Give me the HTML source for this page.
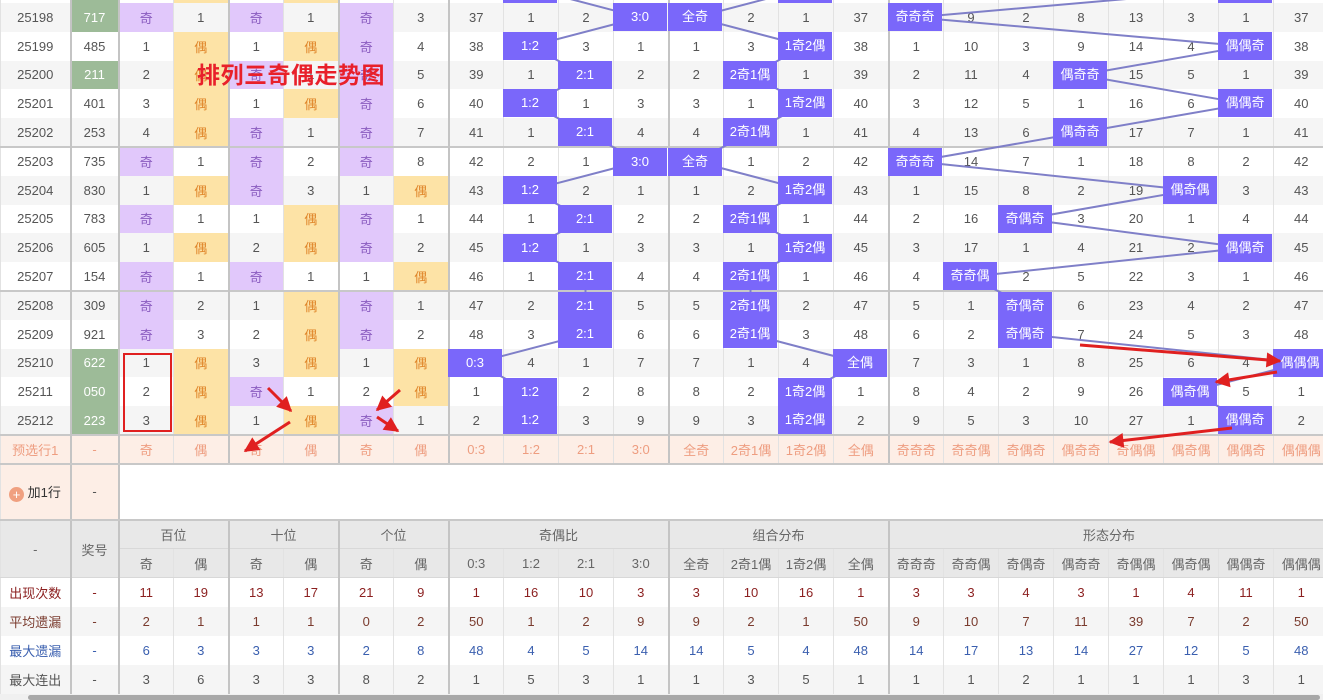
<!DOCTYPE html>
<html><head><meta charset="utf-8"><style>
html,body{margin:0;padding:0;width:1323px;height:700px;overflow:hidden;background:#fff;position:relative}
body{font-family:"Liberation Sans","Noto Sans CJK SC",sans-serif;font-size:13px;color:#555}
table{position:absolute;left:0;top:-25.8px;border-collapse:collapse;table-layout:fixed;width:1328px}
td{height:28.8px;padding:0;text-align:center;border-left:1px solid #e2e2e2;white-space:nowrap;overflow:hidden;box-sizing:border-box}
tr.d td:nth-child(2),tr.d td:nth-child(3),tr.d td:nth-child(5),tr.d td:nth-child(7),tr.d td:nth-child(9),tr.d td:nth-child(13),tr.d td:nth-child(17){border-left:2px solid #c4c4c4}
td.B{border-left:2px solid #c4c4c4}
tr.a td{background:#f5f5f5}
tr.t td{border-top:2px solid #c8c8c8}
td.p{background:#e1c8fb!important;color:#8a5cc0}
td.y{background:#fde3a6!important;color:#e0862a}
td.g{background:#9dbb98!important;color:#fff}
tr.pre td{background:#fdeee6;color:#ee9d80;border-top:2px solid #c8c8c8;border-bottom:2px solid #c8c8c8}
tr.add td{height:56px;border-bottom:2px solid #c8c8c8}
tr.h td{background:#e8e8e8;color:#666;height:29px;border-bottom:1px solid #d8d8d8}
tr.s td{height:29px}
tr.s1 td{color:#8b1f1f}tr.s2 td{color:#7a3b2e}tr.s3 td{color:#3a5faf}
.hl{position:absolute;width:54px;height:28px;background:#7a67fa;color:#fff;font-size:13px;line-height:28px;text-align:center;white-space:nowrap;overflow:hidden}
</style></head><body>
<table>
<colgroup><col style="width:70px"><col style="width:48px"><col span="22" style="width:55px"></colgroup>
<tr class="d"><td></td><td class="g"></td><td></td><td class="y"></td><td></td><td class="y"></td><td></td><td></td><td></td><td></td><td></td><td></td><td></td><td></td><td></td><td></td><td></td><td></td><td></td><td></td><td></td><td></td><td></td><td></td></tr>
<tr class="d a"><td>25198</td><td class="g">717</td><td class="p">奇</td><td>1</td><td class="p">奇</td><td>1</td><td class="p">奇</td><td>3</td><td>37</td><td>1</td><td>2</td><td></td><td></td><td>2</td><td>1</td><td>37</td><td></td><td>9</td><td>2</td><td>8</td><td>13</td><td>3</td><td>1</td><td>37</td></tr>
<tr class="d"><td>25199</td><td>485</td><td>1</td><td class="y">偶</td><td>1</td><td class="y">偶</td><td class="p">奇</td><td>4</td><td>38</td><td></td><td>3</td><td>1</td><td>1</td><td>3</td><td></td><td>38</td><td>1</td><td>10</td><td>3</td><td>9</td><td>14</td><td>4</td><td></td><td>38</td></tr>
<tr class="d a"><td>25200</td><td class="g">211</td><td>2</td><td class="y">偶</td><td class="p">奇</td><td>1</td><td class="p">奇</td><td>5</td><td>39</td><td>1</td><td></td><td>2</td><td>2</td><td></td><td>1</td><td>39</td><td>2</td><td>11</td><td>4</td><td></td><td>15</td><td>5</td><td>1</td><td>39</td></tr>
<tr class="d"><td>25201</td><td>401</td><td>3</td><td class="y">偶</td><td>1</td><td class="y">偶</td><td class="p">奇</td><td>6</td><td>40</td><td></td><td>1</td><td>3</td><td>3</td><td>1</td><td></td><td>40</td><td>3</td><td>12</td><td>5</td><td>1</td><td>16</td><td>6</td><td></td><td>40</td></tr>
<tr class="d a"><td>25202</td><td>253</td><td>4</td><td class="y">偶</td><td class="p">奇</td><td>1</td><td class="p">奇</td><td>7</td><td>41</td><td>1</td><td></td><td>4</td><td>4</td><td></td><td>1</td><td>41</td><td>4</td><td>13</td><td>6</td><td></td><td>17</td><td>7</td><td>1</td><td>41</td></tr>
<tr class="d t"><td>25203</td><td>735</td><td class="p">奇</td><td>1</td><td class="p">奇</td><td>2</td><td class="p">奇</td><td>8</td><td>42</td><td>2</td><td>1</td><td></td><td></td><td>1</td><td>2</td><td>42</td><td></td><td>14</td><td>7</td><td>1</td><td>18</td><td>8</td><td>2</td><td>42</td></tr>
<tr class="d a"><td>25204</td><td>830</td><td>1</td><td class="y">偶</td><td class="p">奇</td><td>3</td><td>1</td><td class="y">偶</td><td>43</td><td></td><td>2</td><td>1</td><td>1</td><td>2</td><td></td><td>43</td><td>1</td><td>15</td><td>8</td><td>2</td><td>19</td><td></td><td>3</td><td>43</td></tr>
<tr class="d"><td>25205</td><td>783</td><td class="p">奇</td><td>1</td><td>1</td><td class="y">偶</td><td class="p">奇</td><td>1</td><td>44</td><td>1</td><td></td><td>2</td><td>2</td><td></td><td>1</td><td>44</td><td>2</td><td>16</td><td></td><td>3</td><td>20</td><td>1</td><td>4</td><td>44</td></tr>
<tr class="d a"><td>25206</td><td>605</td><td>1</td><td class="y">偶</td><td>2</td><td class="y">偶</td><td class="p">奇</td><td>2</td><td>45</td><td></td><td>1</td><td>3</td><td>3</td><td>1</td><td></td><td>45</td><td>3</td><td>17</td><td>1</td><td>4</td><td>21</td><td>2</td><td></td><td>45</td></tr>
<tr class="d"><td>25207</td><td>154</td><td class="p">奇</td><td>1</td><td class="p">奇</td><td>1</td><td>1</td><td class="y">偶</td><td>46</td><td>1</td><td></td><td>4</td><td>4</td><td></td><td>1</td><td>46</td><td>4</td><td></td><td>2</td><td>5</td><td>22</td><td>3</td><td>1</td><td>46</td></tr>
<tr class="d a t"><td>25208</td><td>309</td><td class="p">奇</td><td>2</td><td>1</td><td class="y">偶</td><td class="p">奇</td><td>1</td><td>47</td><td>2</td><td></td><td>5</td><td>5</td><td></td><td>2</td><td>47</td><td>5</td><td>1</td><td></td><td>6</td><td>23</td><td>4</td><td>2</td><td>47</td></tr>
<tr class="d"><td>25209</td><td>921</td><td class="p">奇</td><td>3</td><td>2</td><td class="y">偶</td><td class="p">奇</td><td>2</td><td>48</td><td>3</td><td></td><td>6</td><td>6</td><td></td><td>3</td><td>48</td><td>6</td><td>2</td><td></td><td>7</td><td>24</td><td>5</td><td>3</td><td>48</td></tr>
<tr class="d a"><td>25210</td><td class="g">622</td><td>1</td><td class="y">偶</td><td>3</td><td class="y">偶</td><td>1</td><td class="y">偶</td><td></td><td>4</td><td>1</td><td>7</td><td>7</td><td>1</td><td>4</td><td></td><td>7</td><td>3</td><td>1</td><td>8</td><td>25</td><td>6</td><td>4</td><td></td></tr>
<tr class="d"><td>25211</td><td class="g">050</td><td>2</td><td class="y">偶</td><td class="p">奇</td><td>1</td><td>2</td><td class="y">偶</td><td>1</td><td></td><td>2</td><td>8</td><td>8</td><td>2</td><td></td><td>1</td><td>8</td><td>4</td><td>2</td><td>9</td><td>26</td><td></td><td>5</td><td>1</td></tr>
<tr class="d a"><td>25212</td><td class="g">223</td><td>3</td><td class="y">偶</td><td>1</td><td class="y">偶</td><td class="p">奇</td><td>1</td><td>2</td><td></td><td>3</td><td>9</td><td>9</td><td>3</td><td></td><td>2</td><td>9</td><td>5</td><td>3</td><td>10</td><td>27</td><td>1</td><td></td><td>2</td></tr>
<tr class="d pre"><td>预选行1</td><td>-</td><td>奇</td><td>偶</td><td>奇</td><td>偶</td><td>奇</td><td>偶</td><td>0:3</td><td>1:2</td><td>2:1</td><td>3:0</td><td>全奇</td><td>2奇1偶</td><td>1奇2偶</td><td>全偶</td><td>奇奇奇</td><td>奇奇偶</td><td>奇偶奇</td><td>偶奇奇</td><td>奇偶偶</td><td>偶奇偶</td><td>偶偶奇</td><td>偶偶偶</td></tr>
<tr class="d add"><td style="background:#fdeee6;color:#333;text-align:left;padding-left:8px"><span style="display:inline-block;width:15px;height:15px;border-radius:50%;background:#f0a080;color:#fff;font-size:13px;line-height:15px;text-align:center;vertical-align:-2px">+</span> 加1行</td><td style="background:#fdeee6">-</td><td colspan="22"></td></tr>
<tr class="h"><td rowspan="2">-</td><td rowspan="2" class="B">奖号</td><td colspan="2" class="B">百位</td><td colspan="2" class="B">十位</td><td colspan="2" class="B">个位</td><td colspan="4" class="B">奇偶比</td><td colspan="4" class="B">组合分布</td><td colspan="8" class="B">形态分布</td></tr>
<tr class="h"><td class="B">奇</td><td>偶</td><td class="B">奇</td><td>偶</td><td class="B">奇</td><td>偶</td><td class="B">0:3</td><td>1:2</td><td>2:1</td><td>3:0</td><td class="B">全奇</td><td>2奇1偶</td><td>1奇2偶</td><td>全偶</td><td class="B">奇奇奇</td><td>奇奇偶</td><td>奇偶奇</td><td>偶奇奇</td><td>奇偶偶</td><td>偶奇偶</td><td>偶偶奇</td><td>偶偶偶</td></tr>
<tr class="d s s1"><td>出现次数</td><td>-</td><td>11</td><td>19</td><td>13</td><td>17</td><td>21</td><td>9</td><td>1</td><td>16</td><td>10</td><td>3</td><td>3</td><td>10</td><td>16</td><td>1</td><td>3</td><td>3</td><td>4</td><td>3</td><td>1</td><td>4</td><td>11</td><td>1</td></tr>
<tr class="d s s2 a"><td>平均遗漏</td><td>-</td><td>2</td><td>1</td><td>1</td><td>1</td><td>0</td><td>2</td><td>50</td><td>1</td><td>2</td><td>9</td><td>9</td><td>2</td><td>1</td><td>50</td><td>9</td><td>10</td><td>7</td><td>11</td><td>39</td><td>7</td><td>2</td><td>50</td></tr>
<tr class="d s s3"><td>最大遗漏</td><td>-</td><td>6</td><td>3</td><td>3</td><td>3</td><td>2</td><td>8</td><td>48</td><td>4</td><td>5</td><td>14</td><td>14</td><td>5</td><td>4</td><td>48</td><td>14</td><td>17</td><td>13</td><td>14</td><td>27</td><td>12</td><td>5</td><td>48</td></tr>
<tr class="d s a"><td>最大连出</td><td>-</td><td>3</td><td>6</td><td>3</td><td>3</td><td>8</td><td>2</td><td>1</td><td>5</td><td>3</td><td>1</td><td>1</td><td>3</td><td>5</td><td>1</td><td>1</td><td>1</td><td>2</td><td>1</td><td>1</td><td>1</td><td>3</td><td>1</td></tr>
</table>
<svg style="position:absolute;left:0;top:0" width="1323" height="700">
<g fill="none" stroke="#7f7fc8" stroke-width="2">
<polyline points="530.5,-11.4 640.5,17.4 530.5,46.2 585.5,75 530.5,103.8 585.5,132.6 640.5,161.4 530.5,190.2 585.5,219 530.5,247.8 585.5,276.6 585.5,305.4 585.5,334.2 475.5,363 530.5,391.8 530.5,420.6"/>
<polyline points="805.5,-11.4 695.5,17.4 805.5,46.2 750.5,75 805.5,103.8 750.5,132.6 695.5,161.4 805.5,190.2 750.5,219 805.5,247.8 750.5,276.6 750.5,305.4 750.5,334.2 860.5,363 805.5,391.8 805.5,420.6"/>
<polyline points="1245.5,-11.4 915.5,17.4 1245.5,46.2 1080.5,75 1245.5,103.8 1080.5,132.6 915.5,161.4 1190.5,190.2 1025.5,219 1245.5,247.8 970.5,276.6 1025.5,305.4 1025.5,334.2 1300.5,363 1190.5,391.8 1245.5,420.6"/>
</g></svg>
<div class="hl" style="left:503px;top:-25px">1:2</div><div class="hl" style="left:778px;top:-25px">1奇2偶</div><div class="hl" style="left:1218px;top:-25px">偶偶奇</div>
<div class="hl" style="left:613px;top:3px">3:0</div><div class="hl" style="left:668px;top:3px">全奇</div><div class="hl" style="left:888px;top:3px">奇奇奇</div>
<div class="hl" style="left:503px;top:32px">1:2</div><div class="hl" style="left:778px;top:32px">1奇2偶</div><div class="hl" style="left:1218px;top:32px">偶偶奇</div>
<div class="hl" style="left:558px;top:61px">2:1</div><div class="hl" style="left:723px;top:61px">2奇1偶</div><div class="hl" style="left:1053px;top:61px">偶奇奇</div>
<div class="hl" style="left:503px;top:89px">1:2</div><div class="hl" style="left:778px;top:89px">1奇2偶</div><div class="hl" style="left:1218px;top:89px">偶偶奇</div>
<div class="hl" style="left:558px;top:118px">2:1</div><div class="hl" style="left:723px;top:118px">2奇1偶</div><div class="hl" style="left:1053px;top:118px">偶奇奇</div>
<div class="hl" style="left:613px;top:148px">3:0</div><div class="hl" style="left:668px;top:148px">全奇</div><div class="hl" style="left:888px;top:148px">奇奇奇</div>
<div class="hl" style="left:503px;top:176px">1:2</div><div class="hl" style="left:778px;top:176px">1奇2偶</div><div class="hl" style="left:1163px;top:176px">偶奇偶</div>
<div class="hl" style="left:558px;top:205px">2:1</div><div class="hl" style="left:723px;top:205px">2奇1偶</div><div class="hl" style="left:998px;top:205px">奇偶奇</div>
<div class="hl" style="left:503px;top:234px">1:2</div><div class="hl" style="left:778px;top:234px">1奇2偶</div><div class="hl" style="left:1218px;top:234px">偶偶奇</div>
<div class="hl" style="left:558px;top:262px">2:1</div><div class="hl" style="left:723px;top:262px">2奇1偶</div><div class="hl" style="left:943px;top:262px">奇奇偶</div>
<div class="hl" style="left:558px;top:292px">2:1</div><div class="hl" style="left:723px;top:292px">2奇1偶</div><div class="hl" style="left:998px;top:292px">奇偶奇</div>
<div class="hl" style="left:558px;top:320px">2:1</div><div class="hl" style="left:723px;top:320px">2奇1偶</div><div class="hl" style="left:998px;top:320px">奇偶奇</div>
<div class="hl" style="left:448px;top:349px">0:3</div><div class="hl" style="left:833px;top:349px">全偶</div><div class="hl" style="left:1273px;top:349px">偶偶偶</div>
<div class="hl" style="left:503px;top:378px">1:2</div><div class="hl" style="left:778px;top:378px">1奇2偶</div><div class="hl" style="left:1163px;top:378px">偶奇偶</div>
<div class="hl" style="left:503px;top:406px">1:2</div><div class="hl" style="left:778px;top:406px">1奇2偶</div><div class="hl" style="left:1218px;top:406px">偶偶奇</div>
<div style="position:absolute;left:197px;top:56px;font-size:23px;font-weight:bold;color:#e8202a;letter-spacing:0.5px">排列三奇偶走势图</div>
<div style="position:absolute;left:123px;top:353px;width:45px;height:75px;border:2px solid #e02020"></div>
<svg style="position:absolute;left:0;top:0" width="1323" height="700">
<defs><marker id="m" viewBox="0 0 10 10" refX="9" refY="5" markerWidth="6" markerHeight="5" orient="auto"><path d="M0,0 L10,5 L0,10 z" fill="#e02020"/></marker></defs>
<g stroke="#e02020" stroke-width="3" fill="none" marker-end="url(#m)">
<line x1="1080" y1="345" x2="1280" y2="361"/>
<line x1="1277" y1="372" x2="1216" y2="382"/>
<line x1="1232" y1="428" x2="1110" y2="442"/>
<line x1="268" y1="388" x2="291" y2="411"/>
<line x1="290" y1="422" x2="245" y2="451"/>
<line x1="400" y1="390" x2="377" y2="410"/>
<line x1="377" y1="417" x2="398" y2="431"/>
</g></svg>
<div style="position:absolute;left:0;top:694px;width:1323px;height:6px;background:#f0f0f0"></div>
<div style="position:absolute;left:28px;top:695px;width:1292px;height:5px;background:#a8a8a8;border-radius:3px"></div>
</body></html>
